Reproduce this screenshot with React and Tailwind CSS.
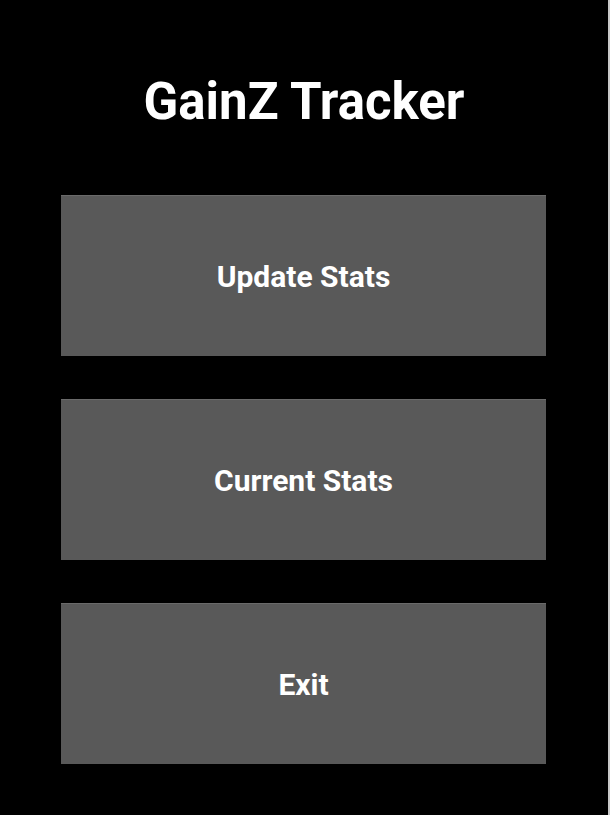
export default function App() {
  const buttons = ["Update Stats", "Current Stats", "Exit"];
  return (
    <div className="flex w-[610px] h-[815px] bg-black" style={{ fontFamily: "Roboto, sans-serif" }}>
      <div className="flex flex-col w-[608px]">
        <div className="h-[195px] flex items-center justify-center pt-[7px]">
          <h1 className="text-[51px] font-bold text-white leading-none">GainZ Tracker</h1>
        </div>
        <div className="flex flex-col gap-[43px] pl-[61px]">
          {buttons.map((b) => (
            <button
              key={b}
              className="w-[485px] h-[161px] bg-[#595959] border-t border-[#6a6a6a] text-white text-[30px] font-bold flex items-center justify-center"
            >
              {b}
            </button>
          ))}
        </div>
      </div>
      <div className="w-[2px] h-full bg-[#c8c8c8]" />
    </div>
  );
}
